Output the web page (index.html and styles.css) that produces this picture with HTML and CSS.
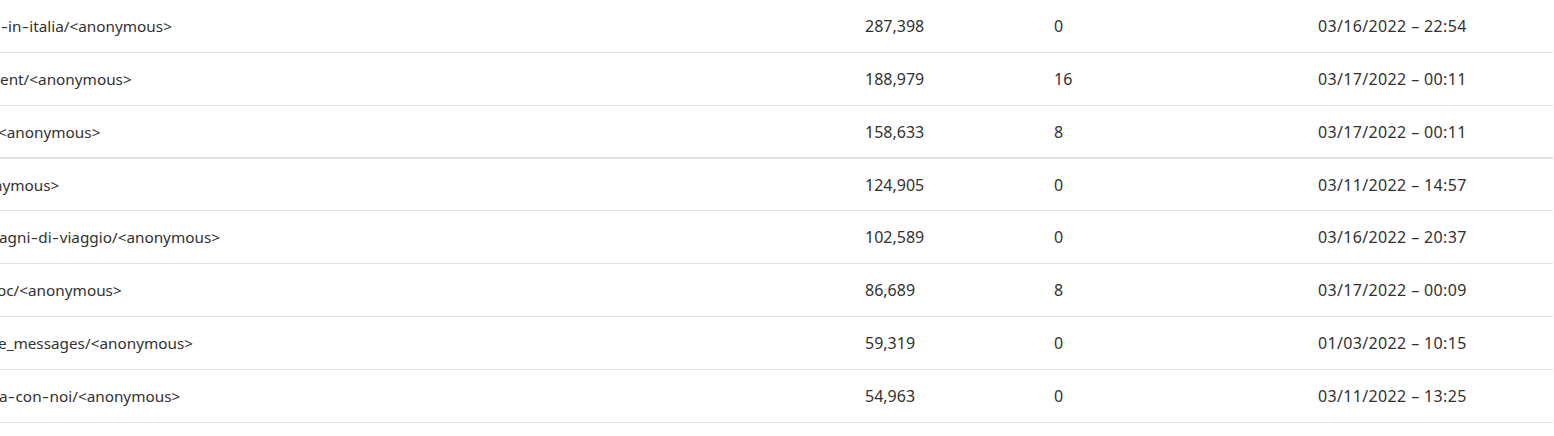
FILE: index.html
```
<!DOCTYPE html>
<html lang="it">
<head>
<meta charset="utf-8">
<link rel="stylesheet" href="styles.css">
</head>
<body>
<div class="list">
  <div class="row">
    <div class="cell name"><span class="path"><span class="hy">-</span>in<span class="hy">-</span>italia/&lt;anonymous&gt;</span></div>
    <div class="cell">287,398</div>
    <div class="cell">0</div>
    <div class="cell date">03/16/2022 – 22:54</div>
  </div>
  <div class="row">
    <div class="cell name"><span class="path">ent/&lt;anonymous&gt;</span></div>
    <div class="cell">188,979</div>
    <div class="cell">16</div>
    <div class="cell date">03/17/2022 – 00:11</div>
  </div>
  <div class="row row-split">
    <div class="cell name"><span class="path cut-2">&lt;anonymous&gt;</span></div>
    <div class="cell">158,633</div>
    <div class="cell">8</div>
    <div class="cell date">03/17/2022 – 00:11</div>
  </div>
  <div class="row row-after-split">
    <div class="cell name"><span class="path cut-7">nymous&gt;</span></div>
    <div class="cell">124,905</div>
    <div class="cell">0</div>
    <div class="cell date">03/11/2022 – 14:57</div>
  </div>
  <div class="row">
    <div class="cell name"><span class="path cut-1">agni<span class="hy">-</span>di<span class="hy">-</span>viaggio/&lt;anonymous&gt;</span></div>
    <div class="cell">102,589</div>
    <div class="cell">0</div>
    <div class="cell date">03/16/2022 – 20:37</div>
  </div>
  <div class="row">
    <div class="cell name"><span class="path cut-3">oc/&lt;anonymous&gt;</span></div>
    <div class="cell">86,689</div>
    <div class="cell">8</div>
    <div class="cell date">03/17/2022 – 00:09</div>
  </div>
  <div class="row">
    <div class="cell name"><span class="path cut-2">e_messages/&lt;anonymous&gt;</span></div>
    <div class="cell">59,319</div>
    <div class="cell">0</div>
    <div class="cell date">01/03/2022 – 10:15</div>
  </div>
  <div class="row">
    <div class="cell name"><span class="path cut-1">a<span class="hy">-</span>con<span class="hy">-</span>noi/&lt;anonymous&gt;</span></div>
    <div class="cell">54,963</div>
    <div class="cell">0</div>
    <div class="cell date">03/11/2022 – 13:25</div>
  </div>
</div>
</body>
</html>
```
FILE: styles.css
```
html, body {
  margin: 0;
  padding: 0;
  background: #ffffff;
}

body {
  font-family: "Noto Sans", "Open Sans", sans-serif;
  font-size: 16px;
  color: #323130;
  overflow: hidden;
}

.list {
  display: flex;
  flex-direction: column;
  margin-right: 1px;
}

.row {
  display: grid;
  grid-template-columns: 865px 189px 264px 1fr;
  align-items: center;
  height: 53px;
  box-sizing: border-box;
  border-bottom: 1px solid #e3e1dd;
}

.row-split {
  border-bottom-width: 2px;
}

.row-after-split {
  height: 52px;
}

.cell {
  white-space: nowrap;
  overflow: hidden;
  line-height: 20px;
}

.name {
  font-size: 15.3px;
}

.hy {
  display: inline-block;
  transform: scaleX(1.4);
  margin: 0 1.5px;
}

.date {
  letter-spacing: 0.35px;
}

.path {
  display: inline-block;
}

.cut-1 { margin-left: -1px; }
.cut-2 { margin-left: -2px; }
.cut-3 { margin-left: -3px; }
.cut-7 { margin-left: -7px; }
```
